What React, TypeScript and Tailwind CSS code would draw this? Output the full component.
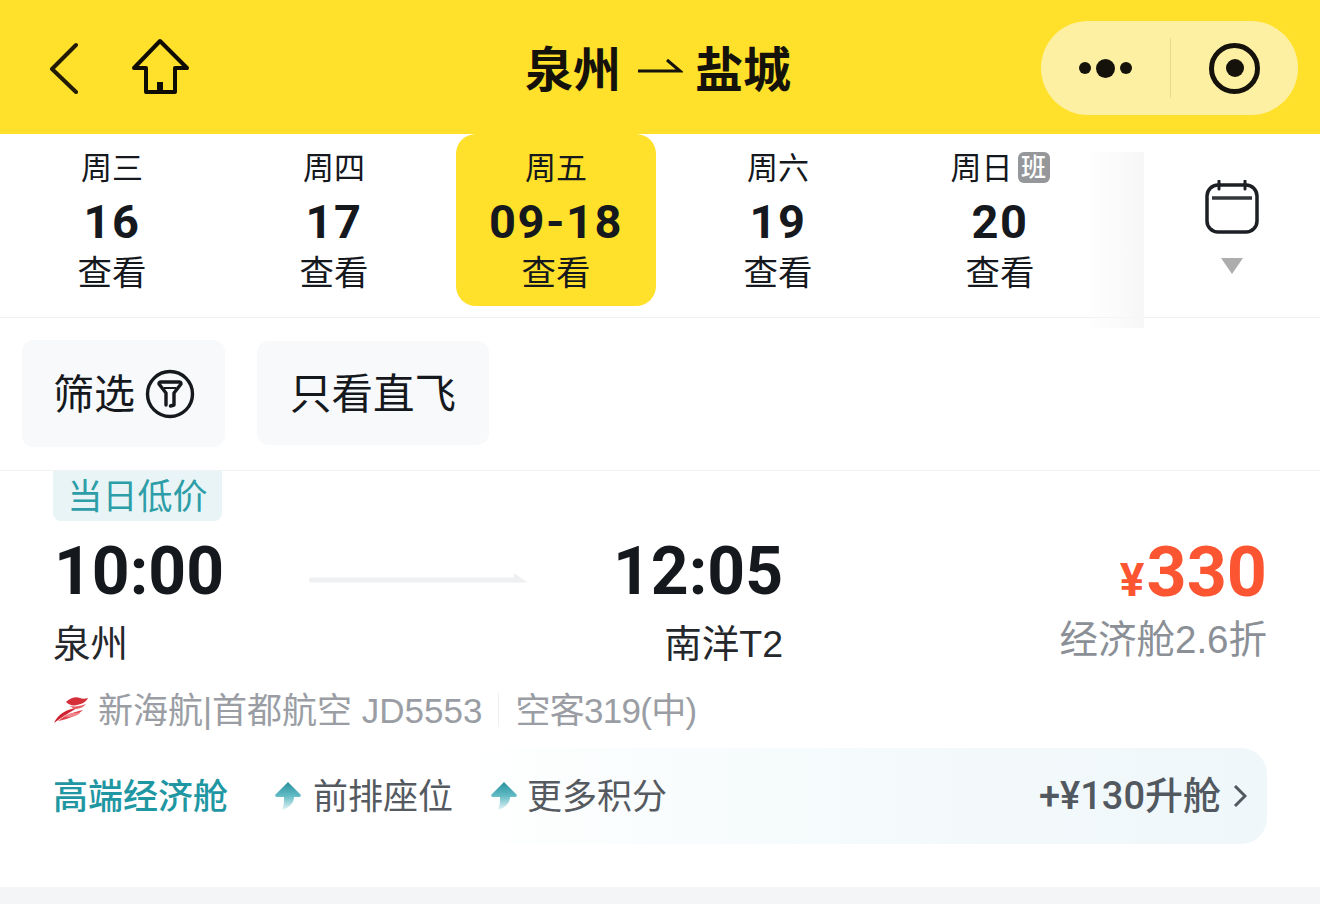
import React from "react";

const CJK = "font-['Inter','Liberation_Sans','Noto_Sans_CJK_SC',sans-serif]";
const NUM = "font-['Roboto','Noto_Sans_CJK_SC',sans-serif]";
const BODY = "font-['Liberation_Sans','Noto_Sans_CJK_SC',sans-serif]";

const days = [
  { week: "周三", num: "16" },
  { week: "周四", num: "17" },
  { week: "周五", num: "09-18", active: true },
  { week: "周六", num: "19" },
  { week: "周日", num: "20", badge: "班" },
];

function BackIcon() {
  return (
    <svg width="32" height="52" viewBox="0 0 32 52" fill="none">
      <path d="M28 3 L4 27 L28 50" stroke="#231c05" strokeWidth="4" strokeLinecap="round" strokeLinejoin="round" />
    </svg>
  );
}

function HomeIcon() {
  return (
    <svg width="60" height="60" viewBox="0 0 60 60" fill="none">
      <path
        d="M30 3 L57 30 H45 V54 H16 V30 H4 Z"
        stroke="#0f0c02"
        strokeWidth="4"
        strokeLinejoin="round"
      />
      <path d="M30 44 V54" stroke="#0f0c02" strokeWidth="6" />
    </svg>
  );
}

function CalendarIcon() {
  return (
    <svg width="56" height="56" viewBox="0 0 56 56" fill="none">
      <rect x="3" y="5" width="50" height="47" rx="11" stroke="#1c1f24" strokeWidth="3.5" />
      <path d="M8 18 H48" stroke="#33363b" strokeWidth="3.5" />
      <path d="M15 1 V9 M41 1 V9" stroke="#1c1f24" strokeWidth="3" strokeLinecap="round" />
    </svg>
  );
}

function FilterIcon() {
  return (
    <svg width="50" height="50" viewBox="0 0 50 50" fill="none">
      <circle cx="25" cy="25" r="22.5" stroke="#15181c" strokeWidth="3.4" />
      <path
        d="M14 15 C14 13.5 15 13 16 13 H34 C35 13 36 13.5 36 15 L29 24 V36 L25.5 37 M14 15 L21 24 V36"
        stroke="#15181c"
        strokeWidth="3.4"
        strokeLinejoin="round"
        strokeLinecap="round"
      />
      <path d="M19 19 H31" stroke="#15181c" strokeWidth="2" />
    </svg>
  );
}

function UpArrow({ id }: { id: string }) {
  return (
    <svg width="28" height="30" viewBox="0 0 28 30">
      <defs>
        <linearGradient id={id} x1="0" y1="0" x2="0" y2="1">
          <stop offset="0" stopColor="#27909d" />
          <stop offset="0.5" stopColor="#63bcc6" />
          <stop offset="1" stopColor="#e6f4f6" />
        </linearGradient>
      </defs>
      <path d="M14 1 L27 14 Q27 16 25 16 H20 C20 22 15 27 8 29 C10 25 10 20 10 16 H3 Q1 16 1 14 Z" fill={`url(#${id})`} />
    </svg>
  );
}

function AirlineLogo() {
  return (
    <svg width="36" height="30" viewBox="0 0 36 30" fill="none">
      <path d="M1 28 C5 19 14 14 24 13 C17 17 9 22 1 28 Z" fill="#cf2230" />
      <path d="M5 26 C12 20 21 17 30 15 C25 20 15 24 5 26 Z" fill="#e2404a" />
      <path d="M10 21 C16 18 24 17 27 18 C23 22 16 23 10 21 Z" fill="#f0868b" />
      <path d="M13 7 C17 3 23 1 27 3 C29 4 32 4 35 3 C33 7 29 9 24 10 C20 11 16 10 13 7 Z" fill="#d5303a" />
      <path d="M17 11 C22 12 28 11 33 9 C31 12 26 14 21 14 Z" fill="#e85c63" />
    </svg>
  );
}

export default function App() {
  return (
    <div className={`w-[1320px] h-[904px] overflow-hidden bg-white flex flex-col ${CJK}`}>
      {/* Title bar */}
      <header className="h-[134px] shrink-0 bg-[#ffe02a] flex items-center pl-[48px] pr-[22px]">
        <div className="flex items-center w-[477px] gap-[50px] pt-[2px]">
          <BackIcon />
          <HomeIcon />
        </div>
        <div className="flex items-center text-[48px] font-semibold text-[#14120a] leading-none pt-[5px]">
          <span>泉州</span>
          <svg className="ml-[16px] mr-[12px] mb-[5px]" width="46" height="20" viewBox="0 0 46 20" fill="none">
            <path d="M1 14 H43 L30 3" stroke="#14120a" strokeWidth="3" />
          </svg>
          <span>盐城</span>
        </div>
        <div className="ml-auto mt-[2px] w-[257px] h-[94px] rounded-[47px] bg-[#fdf0a2] flex items-center">
          <div className="w-[129px] flex justify-center items-center gap-[5px]">
            <span className="w-[12px] h-[12px] rounded-full bg-[#14120a]" />
            <span className="w-[19px] h-[19px] rounded-full bg-[#14120a]" />
            <span className="w-[12px] h-[12px] rounded-full bg-[#14120a]" />
          </div>
          <div className="w-px h-[60px] bg-[#e6d88f]" />
          <div className="flex-1 flex justify-center">
            <div className="w-[51px] h-[51px] rounded-full border-[5px] border-[#14120a] flex items-center justify-center">
              <span className="w-[18px] h-[18px] rounded-full bg-[#14120a]" />
            </div>
          </div>
        </div>
      </header>

      {/* Date strip */}
      <section className="relative h-[184px] shrink-0 border-b border-[#f1f2f3] flex pl-[1px]">
        {days.map((d) => (
          <div key={d.week} className="w-[222px] flex justify-center">
            <div
              className={`w-[200px] h-[172px] rounded-[20px] flex flex-col items-center text-[#15181d] ${
                d.active ? "bg-[#ffe02a]" : ""
              }`}
            >
              <div className="h-[50px] flex items-center gap-[5px] text-[31px] leading-none mt-[8px]">
                {d.week}
                {d.badge && (
                  <span className="w-[32px] h-[31px] rounded-[6px] bg-[#95979b] text-white text-[25px] font-medium flex items-center justify-center">
                    {d.badge}
                  </span>
                )}
              </div>
              <div className={`${NUM} h-[55px] pt-[4px] flex items-center text-[47px] font-bold leading-none tracking-[1.5px]`}>
                {d.num}
              </div>
              <div className="h-[52px] flex items-center text-[34.5px] leading-none">查看</div>
            </div>
          </div>
        ))}
        <div className="absolute right-[176px] top-[18px] w-[60px] h-[176px] bg-gradient-to-r from-transparent to-[#f7f7f8]" />
        <div className="ml-auto relative w-[176px] h-[183px] bg-white flex flex-col items-center pt-[46px] gap-[21px]">
          <CalendarIcon />
          <svg width="24" height="18" viewBox="0 0 24 18">
            <path d="M1 1 H23 L12 17 Z" fill="#adadad" />
          </svg>
        </div>
      </section>

      {/* Quick filters */}
      <section className="h-[153px] shrink-0 border-b border-[#f1f2f3] flex items-start pl-[22px] pt-[22px] gap-[32px]">
        <div className="w-[203px] h-[107px] rounded-[12px] bg-[#f7f9fa] flex items-center pl-[32px] gap-[10px] text-[41px] leading-none text-[#15181d]">
          <span className="mt-[2px] -ml-[1px]">筛选</span>
          <FilterIcon />
        </div>
        <div className="w-[232px] h-[104px] mt-[1px] rounded-[12px] bg-[#f7f9fa] flex items-center justify-center text-[41.5px] leading-none text-[#15181d] pt-[4px]">
          只看直飞
        </div>
      </section>

      {/* Flight card */}
      <section className="flex-1 flex flex-col pl-[53px] pr-[53px]">
        <div className="w-[169px] h-[50px] rounded-b-[8px] bg-[#e8f4f5] flex items-center justify-center text-[35px] leading-none text-[#2d9ea8]">
          当日低价
        </div>

        <div className="flex items-start h-[162px]">
          <div className="w-[255px] flex flex-col">
            <div className={`${NUM} text-[66px] font-bold leading-none text-[#15181d] mt-[18px] ml-[1px]`}>10:00</div>
            <div className="text-[37.5px] leading-none text-[#24272c] mt-[20px]">泉州</div>
          </div>
          <svg className="mt-[52px] shrink-0" width="220" height="14" viewBox="0 0 220 14">
            <path d="M2 4.5 H206 V0 L220 9.5 H2 Q0 7 2 4.5 Z" fill="#eff0f1" />
          </svg>
          <div className="w-[255px] flex flex-col items-end">
            <div className={`${NUM} text-[66px] font-bold leading-none text-[#15181d] mt-[18px]`}>12:05</div>
            <div className={`${BODY} text-[37.5px] leading-none text-[#24272c] mt-[21px]`}>南洋T2</div>
          </div>
          <div className="ml-auto flex flex-col items-end">
            <div className={`${NUM} flex items-baseline font-bold text-[#fc5531] leading-none mt-[16px]`}>
              <span className="text-[46px] mr-[2px]">¥</span>
              <span className="text-[70px] leading-none">330</span>
            </div>
            <div className={`${BODY} text-[38.5px] leading-none text-[#8b9097] mt-[14px]`}>经济舱2.6折</div>
          </div>
        </div>

        <div className={`${BODY} h-[54px] flex items-center text-[35px] leading-none text-[#9a9ea4]`}>
          <AirlineLogo />
          <span className="ml-[9px]">新海航|首都航空 JD5553</span>
          <span className="w-px h-[34px] bg-[#eceef0] mx-[16px]" />
          <span className="tracking-[-0.7px]">空客319(中)</span>
        </div>

        <div className="relative mt-[11px] h-[96px] flex items-center">
          <div className="absolute left-[400px] right-0 top-0 bottom-0 rounded-[26px] bg-gradient-to-r from-white via-[#f6fbfc] via-40% to-[#eff7fa]" />
          <span className="relative text-[35px] font-medium leading-none text-[#1f97a3]">高端经济舱</span>
          <span className="relative ml-[46px] flex items-center gap-[11px] text-[35px] leading-none text-[#555a61]">
            <UpArrow id="arrow-seat" />
            前排座位
          </span>
          <span className="relative ml-[37px] flex items-center gap-[9px] text-[35px] leading-none text-[#555a61]">
            <UpArrow id="arrow-points" />
            更多积分
          </span>
          <span className={`${NUM} relative ml-auto mr-[20px] flex items-center text-[38px] font-medium leading-none text-[#52585f]`}>
            +¥130升舱
            <svg className="ml-[12px]" width="14" height="24" viewBox="0 0 14 24" fill="none">
              <path d="M2 2 L12 12 L2 22" stroke="#52585f" strokeWidth="3" />
            </svg>
          </span>
        </div>
      </section>

      <div className="h-[17px] shrink-0 bg-[#f3f5f7]" />
    </div>
  );
}
